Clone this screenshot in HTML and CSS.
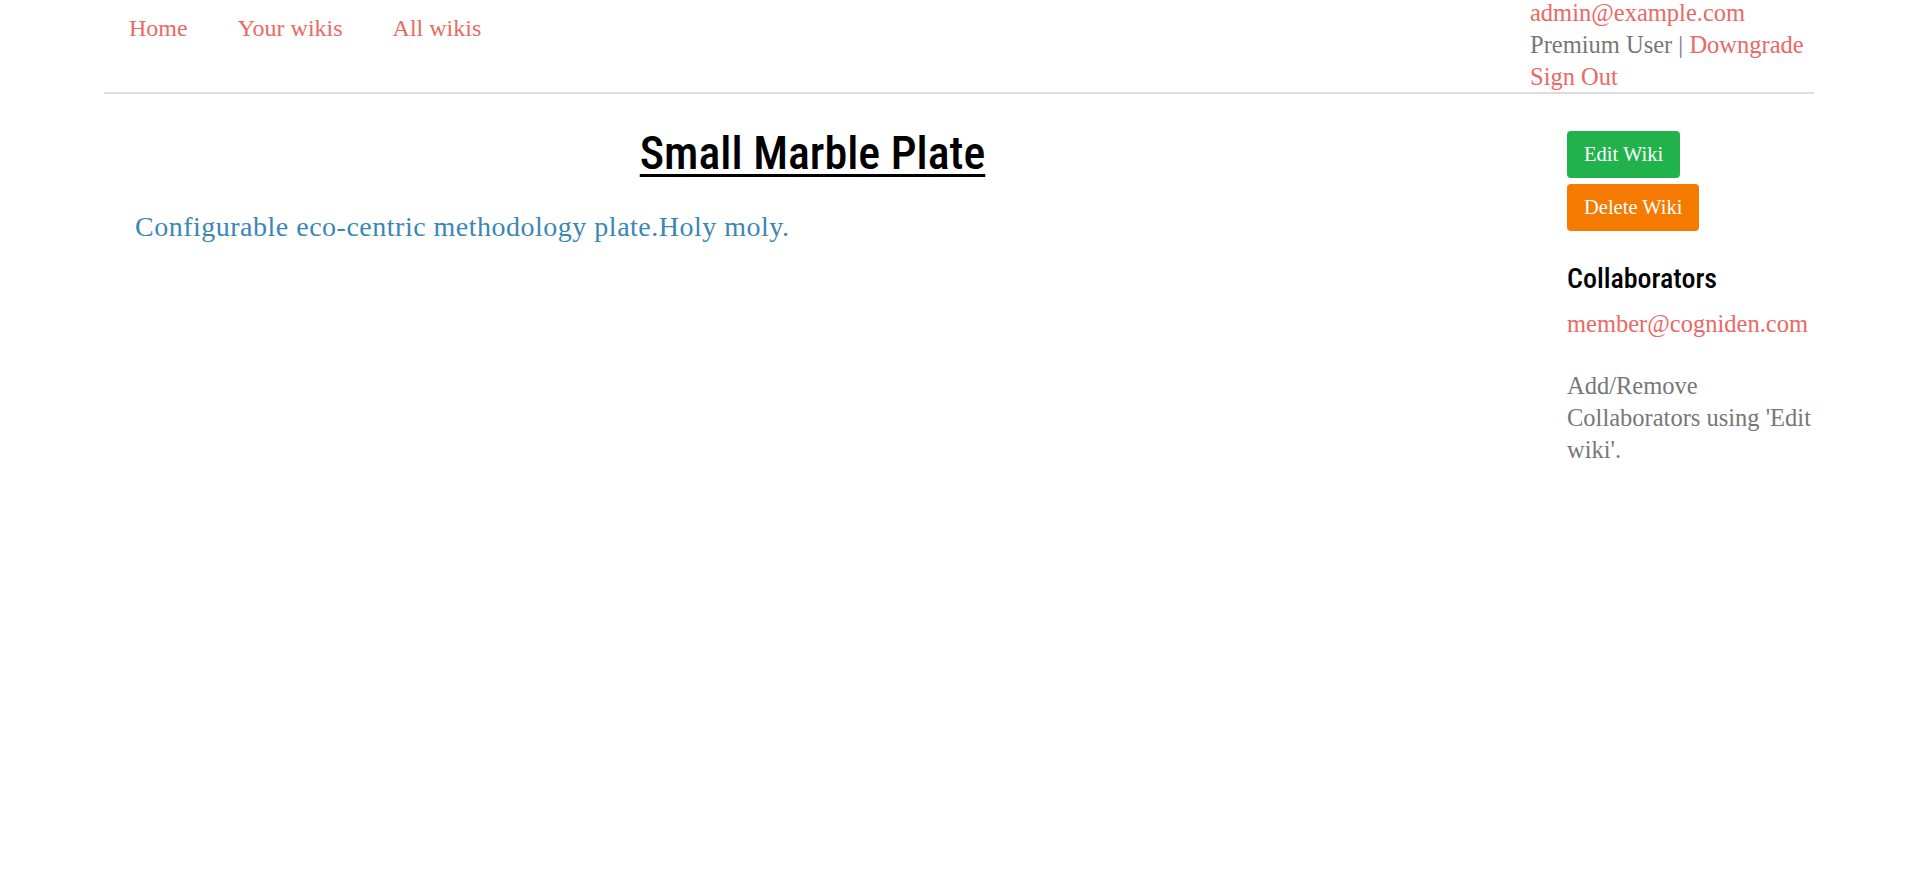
FILE: index.html
```html
<!DOCTYPE html>
<html>
<head>
<meta charset="utf-8">
<title>Small Marble Plate</title>
<link rel="stylesheet" href="styles.css">
</head>
<body>
<div class="page">
  <header class="topbar">
    <nav class="mainnav">
      <a href="#">Home</a>
      <a href="#">Your wikis</a>
      <a href="#">All wikis</a>
    </nav>
    <div class="userbox">
      <a href="#">admin@example.com</a><br>
      Premium User | <a href="#">Downgrade</a><br>
      <a href="#">Sign Out</a>
    </div>
  </header>
  <main class="content">
    <section class="wiki">
      <h1 class="wiki-title">Small Marble Plate</h1>
      <p class="wiki-body">Configurable eco-centric methodology plate.Holy moly.</p>
    </section>
    <aside class="sidebar">
      <a href="#" class="btn btn-success">Edit Wiki</a>
      <a href="#" class="btn btn-warning">Delete Wiki</a>
      <h3 class="side-title">Collaborators</h3>
      <p class="side-text"><a href="#">member@cogniden.com</a></p>
      <p class="side-text side-note">Add/Remove Collaborators using 'Edit wiki'.</p>
    </aside>
  </main>
</div>
</body>
</html>
```

FILE: styles.css
```css
html, body {
  margin: 0;
  padding: 0;
  background: #ffffff;
}

body {
  font-family: "Liberation Serif", "Times New Roman", serif;
  color: #777777;
  font-size: 24px;
}

a {
  color: #eb6864;
  text-decoration: none;
}

.page {
  padding: 0 105px 0 104px;
}

.topbar {
  display: flex;
  align-items: flex-start;
  height: 92px;
  border-bottom: 2px solid #dddddd;
}

.mainnav {
  display: flex;
  padding-top: 12px;
  line-height: 32px;
}

.mainnav a {
  padding: 0 25px;
}

.userbox {
  margin-left: auto;
  width: 284px;
  margin-top: -3px;
  font-size: 24.5px;
  line-height: 32px;
  white-space: nowrap;
}

.content {
  display: grid;
  grid-template-columns: 1417px 1fr;
}

.wiki {
  padding-top: 34px;
}

.wiki-title {
  margin: 0;
  text-align: center;
  font-family: "Roboto Condensed", "Open Sans", "DejaVu Sans Condensed", sans-serif;
  font-stretch: 75%;
  font-weight: 500;
  font-size: 46px;
  line-height: 1.1;
  color: #000000;
  text-decoration: underline;
  text-decoration-thickness: 3px;
  text-underline-offset: 5px;
}

.wiki-body {
  margin: 30px 0 0 31px;
  font-size: 28px;
  letter-spacing: 0.5px;
  line-height: 36px;
  color: #3a87b5;
}

.sidebar {
  padding-left: 46px;
  padding-top: 37px;
}

.btn {
  display: table;
  color: #ffffff;
  font-size: 20.5px;
  line-height: 27px;
  padding: 10px 17px;
  border-radius: 4px;
}

.btn + .btn {
  margin-top: 6px;
}

.btn-success {
  background: #22b24c;
}

.btn-warning {
  background: #f57a00;
}

.side-title {
  margin: 32px 0 0;
  font-family: "Roboto Condensed", "Open Sans", "DejaVu Sans Condensed", sans-serif;
  font-stretch: 75%;
  font-weight: 500;
  font-size: 28px;
  line-height: 31px;
  color: #000000;
}

.side-text {
  margin: 14px 0 0;
  font-size: 24.5px;
  line-height: 32px;
}

.side-note {
  margin-top: 30px;
}
```
